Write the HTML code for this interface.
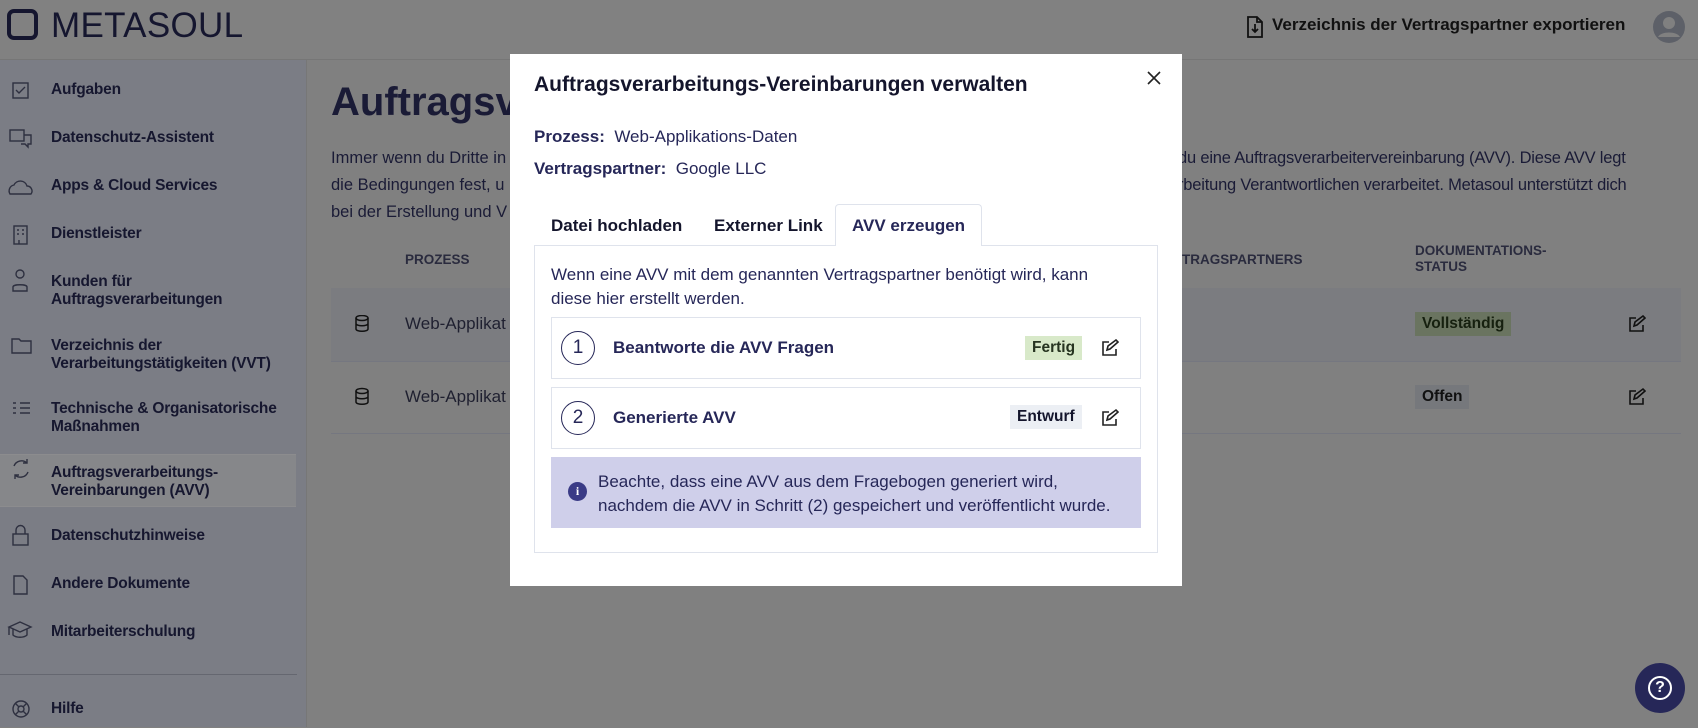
<!DOCTYPE html>
<html><head><meta charset="utf-8"><style>
*{box-sizing:border-box;margin:0;padding:0}
body{width:1698px;height:727px;overflow:hidden;position:relative;font-family:"Liberation Sans",Arial,sans-serif;background:#808080;color:#14152c}
.a{position:absolute;white-space:nowrap}
.hdr{left:0;top:0;width:1698px;height:60px;background:#818181;border-bottom:1px solid #767676}
.side{left:0;top:60px;width:307px;height:667px;background:#7b7d85;border-right:1px solid #777}
.nav{left:51px;font-size:15.5px;font-weight:bold;color:#16172f;line-height:18px;letter-spacing:-0.2px}
.m{color:#1a1b36}
.modal{left:510px;top:54px;width:672px;height:532px;background:#fff}
.t{color:#262758}
.badge{font-size:15.5px;font-weight:bold;padding:0 7px;height:24px;line-height:24px}
.card{left:551px;width:590px;border:1px solid #dfe3ec;background:#fff}
.circ{width:34px;height:34px;border:1.2px solid #262758;border-radius:50%;text-align:center;line-height:32px;font-size:19px;color:#262758}
</style></head><body>
<div class="a hdr"></div>
<div class="a" style="left:7px;top:9px;width:31px;height:31px;border:4px solid #15162f;border-radius:7px"></div>
<div class="a" style="left:51px;top:6px;font-size:35px;color:#15162f;letter-spacing:0.3px">METASOUL</div>
<svg class="a" style="left:1247px;top:16px" width="16" height="22" viewBox="0 0 16 22"><path d="M1 1h9l5 5v15H1z M10 1v5h5" fill="none" stroke="#111" stroke-width="1.8"/><path d="M8 8v8M5 13l3 3 3-3" fill="none" stroke="#111" stroke-width="1.8"/></svg>
<div class="a" style="left:1272px;top:15px;font-size:17px;font-weight:bold;color:#111">Verzeichnis der Vertragspartner exportieren</div>
<svg class="a" style="left:1653px;top:11px" width="32" height="32" viewBox="0 0 32 32"><circle cx="16" cy="16" r="16" fill="#5d6068"/><circle cx="16" cy="12" r="6" fill="#808080"/><path d="M5 26c3-6 19-6 22 0" fill="#808080"/></svg>

<div class="a side"></div>
<div class="a" style="left:0;top:454px;width:296px;height:53px;background:#86878a;border-top:1px solid #8c8c8e;border-bottom:1px solid #8c8c8e"></div>
<div class="a" style="left:0;top:674px;width:297px;height:1px;background:#656770"></div>
<svg class="a" style="left:0;top:78px" width="40" height="650" viewBox="0 0 40 650" fill="none" stroke="#2e3040" stroke-width="1.4">
<rect x="13" y="5" width="15" height="15"/><path d="M16 12l3 3 6-6"/>
<rect x="10" y="52" width="14" height="11"/><path d="M24 57h7v9h-3v3l-3-3h-4"/>
<path d="M10 116h21a5 5 0 0 0-4-8 7 7 0 0 0-13-1 6 6 0 0 0-4 9z"/>
<rect x="14" y="148" width="13" height="18"/><path d="M17 152h2M22 152h2M17 156h2M22 156h2M19 162v4"/>
<circle cx="20" cy="196" r="4"/><path d="M13 213v-4c0-3 14-3 14 0v4z"/>
<path d="M12 261h7l2 2h10v12H12z"/>
<path d="M13 325h3M13 330h3M13 335h3M20 325h10M20 330h10M20 335h10"/>
<path d="M14 388a8 8 0 0 1 13-3M27 381v4h-4M28 394a8 8 0 0 1-13 3M15 401v-4h4"/>
<rect x="13" y="456" width="15" height="11"/><path d="M16 456v-4a4 4 0 0 1 9 0v4"/>
<path d="M14 498h9l4 4v14H14z"/>
<path d="M9 549l11-5 11 5-11 5zM13 551v6c3 3 11 3 14 0v-6M9 549v8"/>
<circle cx="21" cy="631" r="8"/><circle cx="21" cy="631" r="3"/><path d="M15 625l4 4M27 625l-4 4M15 637l4-4M27 637l-4-4"/>
</svg>
<div class="a nav" style="top:81px">Aufgaben</div>
<div class="a nav" style="top:129px">Datenschutz-Assistent</div>
<div class="a nav" style="top:177px">Apps &amp; Cloud Services</div>
<div class="a nav" style="top:225px">Dienstleister</div>
<div class="a nav" style="top:273px">Kunden für<br>Auftragsverarbeitungen</div>
<div class="a nav" style="top:337px">Verzeichnis der<br>Verarbeitungstätigkeiten (VVT)</div>
<div class="a nav" style="top:400px">Technische &amp; Organisatorische<br>Maßnahmen</div>
<div class="a nav" style="top:464px">Auftragsverarbeitungs-<br>Vereinbarungen (AVV)</div>
<div class="a nav" style="top:527px">Datenschutzhinweise</div>
<div class="a nav" style="top:575px">Andere Dokumente</div>
<div class="a nav" style="top:623px">Mitarbeiterschulung</div>
<div class="a nav" style="top:700px">Hilfe</div>

<div class="a m" style="left:331px;top:80px;font-size:40px;font-weight:bold">Auftragsv</div>
<div class="a m" style="left:331px;top:145px;font-size:16.5px;line-height:27px">Immer wenn du Dritte in<br>die Bedingungen fest, u<br>bei der Erstellung und V</div>
<div class="a m" style="left:1178px;top:145px;font-size:16.5px;line-height:27px;letter-spacing:-0.2px">du eine Auftragsverarbeitervereinbarung (AVV). Diese AVV legt<br>rbeitung Verantwortlichen verarbeitet. Metasoul unterstützt dich</div>
<div class="a m" style="left:405px;top:252px;font-size:13.5px;font-weight:bold;color:#2a2b3e">PROZESS</div>
<div class="a m" style="left:1182px;top:252px;font-size:13.5px;font-weight:bold;color:#2a2b3e">TRAGSPARTNERS</div>
<div class="a m" style="left:1415px;top:243px;font-size:13.5px;font-weight:bold;color:#2a2b3e;line-height:16px">DOKUMENTATIONS-<br>STATUS</div>
<div class="a" style="left:331px;top:288px;width:1350px;height:73px;background:#7b7c80"></div>
<div class="a" style="left:331px;top:361px;width:1350px;height:1px;background:#757780"></div>
<div class="a" style="left:331px;top:433px;width:1350px;height:1px;background:#757780"></div>
<svg class="a" style="left:354px;top:315px" width="16" height="94" viewBox="0 0 16 94" fill="none" stroke="#111" stroke-width="1.5"><ellipse cx="8" cy="3" rx="6" ry="2.5"/><path d="M2 3v11c0 3 12 3 12 0V3M2 8.5c0 3 12 3 12 0"/><g transform="translate(0,73)"><ellipse cx="8" cy="3" rx="6" ry="2.5"/><path d="M2 3v11c0 3 12 3 12 0V3M2 8.5c0 3 12 3 12 0"/></g></svg>
<div class="a m" style="left:405px;top:314px;font-size:17px;color:#1f2030">Web-Applikat</div>
<div class="a m" style="left:405px;top:387px;font-size:17px;color:#1f2030">Web-Applikat</div>
<div class="a badge" style="left:1415px;top:312px;background:#6a7460;color:#16200f">Vollständig</div>
<div class="a badge" style="left:1415px;top:385px;background:#76787c;color:#111">Offen</div>
<svg class="a" style="left:1628px;top:315px" width="18" height="90" viewBox="0 0 18 90" fill="none" stroke="#111" stroke-width="1.6"><path d="M8 3H2v13h13v-6M6 11l1-4 8-6 2 2-8 7z"/><g transform="translate(0,73)"><path d="M8 3H2v13h13v-6M6 11l1-4 8-6 2 2-8 7z"/></g></svg>
<div class="a" style="left:1635px;top:663px;width:50px;height:50px;border-radius:50%;background:#262758"></div>
<div class="a" style="left:1648px;top:676px;width:24px;height:24px;border:2.5px solid #fff;border-radius:50%;color:#fff;font-weight:bold;font-size:16px;text-align:center;line-height:19px">?</div>

<div class="a modal"></div>
<div class="a t" style="left:534px;top:73px;font-size:21px;font-weight:bold;color:#14152c">Auftragsverarbeitungs-Vereinbarungen verwalten</div>
<svg class="a" style="left:1147px;top:71px" width="14" height="14" viewBox="0 0 14 14"><path d="M1 1l12 12M13 1L1 13" stroke="#222" stroke-width="1.6"/></svg>
<div class="a t" style="left:534px;top:127px;font-size:17px"><b>Prozess:</b>&nbsp; Web-Applikations-Daten</div>
<div class="a t" style="left:534px;top:159px;font-size:17px"><b>Vertragspartner:</b>&nbsp; Google LLC</div>
<div class="a" style="left:534px;top:245px;width:624px;height:308px;border:1px solid #dfe3ec"></div>
<div class="a" style="left:835px;top:204px;width:147px;height:42px;border:1px solid #dfe3ec;border-bottom:none;border-radius:4px 4px 0 0;background:#fff"></div>
<div class="a" style="left:551px;top:216px;font-size:17px;font-weight:bold;color:#14152c">Datei hochladen</div>
<div class="a" style="left:714px;top:216px;font-size:17px;font-weight:bold;color:#14152c">Externer Link</div>
<div class="a t" style="left:852px;top:216px;font-size:17px;font-weight:bold">AVV erzeugen</div>
<div class="a t" style="left:551px;top:263px;font-size:17px;line-height:24px">Wenn eine AVV mit dem genannten Vertragspartner benötigt wird, kann<br>diese hier erstellt werden.</div>
<div class="a card" style="top:317px;height:62px"></div>
<div class="a card" style="top:387px;height:62px"></div>
<div class="a circ" style="left:561px;top:331px">1</div>
<div class="a circ" style="left:561px;top:401px">2</div>
<div class="a t" style="left:613px;top:338px;font-size:17px;font-weight:bold">Beantworte die AVV Fragen</div>
<div class="a t" style="left:613px;top:408px;font-size:17px;font-weight:bold">Generierte AVV</div>
<div class="a badge" style="left:1025px;top:336px;background:#d8e9c9;color:#263420">Fertig</div>
<div class="a badge" style="left:1010px;top:405px;background:#eceff4;color:#14152c">Entwurf</div>
<svg class="a" style="left:1101px;top:339px" width="18" height="90" viewBox="0 0 18 90" fill="none" stroke="#222" stroke-width="1.6"><path d="M8 3H2v13h13v-6M6 11l1-4 8-6 2 2-8 7z"/><g transform="translate(0,70)"><path d="M8 3H2v13h13v-6M6 11l1-4 8-6 2 2-8 7z"/></g></svg>
<div class="a" style="left:551px;top:457px;width:590px;height:71px;background:#cfcfea"></div>
<div class="a" style="left:568px;top:482px;width:19px;height:19px;border-radius:50%;background:#3a3b86;color:#fff;font-size:12px;font-weight:bold;text-align:center;line-height:19px;font-family:'Liberation Serif',serif">i</div>
<div class="a t" style="left:598px;top:470px;font-size:17px;line-height:24px">Beachte, dass eine AVV aus dem Fragebogen generiert wird,<br>nachdem die AVV in Schritt (2) gespeichert und veröffentlicht wurde.</div>
</body></html>
